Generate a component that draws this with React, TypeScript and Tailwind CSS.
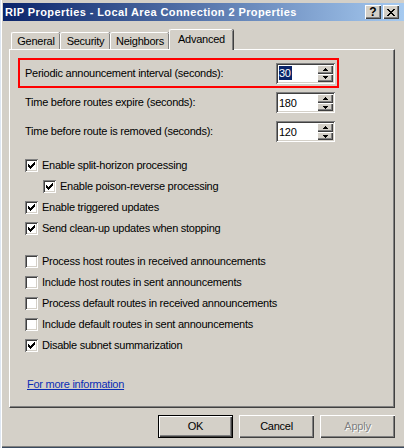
import React from "react";

const SUNKEN =
  "shadow-[inset_1px_1px_0_#808080,inset_-1px_-1px_0_#ffffff,inset_2px_2px_0_#404040,inset_-2px_-2px_0_#d4d0c8]";
const RAISED =
  "shadow-[inset_1px_1px_0_#ffffff,inset_-1px_-1px_0_#404040,inset_-2px_-2px_0_#808080]";

function Check({ checked }: { checked: boolean }) {
  return (
    <span className={`relative block w-[13px] h-[13px] shrink-0 bg-white ${SUNKEN}`}>
      {checked && (
        <svg
          className="absolute left-[3px] top-[3px]"
          width="7"
          height="7"
          viewBox="0 0 7 7"
          shapeRendering="crispEdges"
        >
          {[2, 3, 4, 3, 2, 1, 0].map((y, x) => (
            <rect key={x} x={x} y={y} width="1" height="3" fill="#000" />
          ))}
        </svg>
      )}
    </span>
  );
}

function Tri({ up }: { up?: boolean }) {
  return (
    <svg width="5" height="3" viewBox="0 0 5 3" shapeRendering="crispEdges">
      {up ? (
        <>
          <rect x="2" y="0" width="1" height="1" fill="#000" />
          <rect x="1" y="1" width="3" height="1" fill="#000" />
          <rect x="0" y="2" width="5" height="1" fill="#000" />
        </>
      ) : (
        <>
          <rect x="0" y="0" width="5" height="1" fill="#000" />
          <rect x="1" y="1" width="3" height="1" fill="#000" />
          <rect x="2" y="2" width="1" height="1" fill="#000" />
        </>
      )}
    </svg>
  );
}

function Spin({ value, selected }: { value: string; selected?: boolean }) {
  return (
    <div className={`flex w-[59px] h-[21px] bg-white p-[2px] ${SUNKEN}`}>
      <div className="flex-1 flex items-center pl-[1px]">
        <span
          className={
            selected
              ? "bg-[#0a246a] text-white leading-[14px] pr-[1px]"
              : "text-black leading-[14px]"
          }
        >
          {value}
        </span>
      </div>
      <div className="flex flex-col w-[16px]">
        <div className={`h-[9px] bg-[#d4d0c8] flex items-center justify-center ${RAISED}`}>
          <Tri up />
        </div>
        <div className={`h-[8px] bg-[#d4d0c8] flex items-center justify-center ${RAISED}`}>
          <Tri />
        </div>
      </div>
    </div>
  );
}

function FieldRow({
  label,
  value,
  boxed,
  selected,
  tall,
}: {
  label: string;
  value: string;
  boxed?: boolean;
  selected?: boolean;
  tall?: boolean;
}) {
  return (
    <div
      className={`ml-[8px] w-[321px] ${tall ? "h-[30px]" : "h-[29px]"} border-2 ${
        boxed ? "border-[#ff0000]" : "border-transparent"
      } flex items-center justify-between pl-[5px] pr-[2px]`}
    >
      <span>{label}</span>
      <Spin value={value} selected={selected} />
    </div>
  );
}

function CheckRow({
  label,
  checked,
  indent,
}: {
  label: string;
  checked: boolean;
  indent?: boolean;
}) {
  return (
    <div className={`h-[21px] flex items-center gap-[4px] ${indent ? "pl-[33px]" : "pl-[15px]"}`}>
      <Check checked={checked} />
      <span>{label}</span>
    </div>
  );
}

function Button({
  label,
  isDefault,
  disabled,
}: {
  label: string;
  isDefault?: boolean;
  disabled?: boolean;
}) {
  return (
    <div
      className={`w-[75px] h-[23px] flex items-center justify-center bg-[#d4d0c8] ${
        isDefault
          ? "shadow-[inset_0_0_0_1px_#000000,inset_2px_2px_0_#ffffff,inset_-2px_-2px_0_#404040,inset_-3px_-3px_0_#808080]"
          : RAISED
      }`}
    >
      <span
        className={
          disabled ? "text-[#808080] [text-shadow:1px_1px_0_#ffffff]" : "text-black"
        }
      >
        {label}
      </span>
    </div>
  );
}

function Tab({ label, w, selected }: { label: string; w: string; selected?: boolean }) {
  if (selected) {
    return (
      <div
        className={`${w} h-[21px] relative z-10 bg-[#d4d0c8] rounded-t-[2px] border-l border-t border-white shadow-[inset_-1px_0_0_#808080,1px_0_0_#404040] flex items-center justify-center pb-[2px]`}
      >
        {label}
      </div>
    );
  }
  return (
    <div
      className={`${w} h-[17px] mb-[1px] bg-[#d4d0c8] rounded-t-[2px] border-l border-t border-white shadow-[inset_-1px_0_0_#808080,1px_0_0_#404040] flex items-center justify-center`}
    >
      {label}
    </div>
  );
}

export default function App() {
  return (
    <div
      className="w-[404px] h-[448px] bg-[#d4d0c8] flex flex-col pt-[3px] pl-[3px] pb-[3px] text-[11px] leading-[13px] tracking-[-0.25px] text-black font-['Liberation_Sans',Arial,sans-serif] shadow-[inset_1px_0_0_#dde6f2,inset_2px_0_0_#ffffff,inset_0_-1px_0_#3a4a5e,inset_0_-2px_0_#808080] overflow-hidden"
    >
      {/* Title bar */}
      <div className="h-[18px] flex items-center pl-[2px] pr-[5px] bg-[linear-gradient(to_right,#0a246a,#a6caf0)]">
        <span className="flex-1 text-white font-bold tracking-[0.4px]">
          RIP Properties - Local Area Connection 2 Properties
        </span>
        <div className="flex gap-[2px]">
          <div className={`w-[16px] h-[14px] bg-[#d4d0c8] flex items-center justify-center ${RAISED}`}>
            <span className="font-bold text-[12px] leading-[12px] tracking-normal">?</span>
          </div>
          <div className={`w-[16px] h-[14px] bg-[#d4d0c8] flex items-center justify-center pr-[1px] ${RAISED}`}>
            <svg width="8" height="7" viewBox="0 0 8 7" shapeRendering="crispEdges">
              {[0, 1, 2, 3, 4, 5, 6].map((i) => (
                <React.Fragment key={i}>
                  <rect x={i} y={i} width="2" height="1" fill="#000" />
                  <rect x={6 - i} y={i} width="2" height="1" fill="#000" />
                </React.Fragment>
              ))}
            </svg>
          </div>
        </div>
      </div>

      {/* Body */}
      <div className="flex flex-col pl-[6px] pr-[9px]">
        {/* Tabs */}
        <div className="mt-[8px] h-[21px] flex items-end pl-[2px]">
          <Tab label="General" w="w-[49px]" />
          <Tab label="Security" w="w-[50px]" />
          <Tab label="Neighbors" w="w-[59px]" />
          <Tab label="Advanced" w="w-[64px]" selected />
        </div>

        {/* Panel */}
        <div className="-mt-px h-[359px] border-t border-l border-white border-r border-b border-r-[#404040] border-b-[#404040] shadow-[inset_-1px_-1px_0_#808080] flex flex-col">
          <div className="mt-[8px]">
            <FieldRow
              label="Periodic announcement interval (seconds):"
              value="30"
              boxed
              selected
              tall
            />
            <FieldRow label="Time before routes expire (seconds):" value="180" />
            <FieldRow label="Time before route is removed (seconds):" value="120" />
          </div>

          <div className="mt-[9px] flex flex-col">
            <CheckRow label="Enable split-horizon processing" checked />
            <CheckRow label="Enable poison-reverse processing" checked indent />
            <CheckRow label="Enable triggered updates" checked />
            <CheckRow label="Send clean-up updates when stopping" checked />
          </div>

          <div className="mt-[12px] flex flex-col">
            <CheckRow label="Process host routes in received announcements" checked={false} />
            <CheckRow label="Include host routes in sent announcements" checked={false} />
            <CheckRow label="Process default routes in received announcements" checked={false} />
            <CheckRow label="Include default routes in sent announcements" checked={false} />
            <CheckRow label="Disable subnet summarization" checked />
          </div>

          <div className="mt-[22px] pl-[17px]">
            <span className="text-[#0a2db5] underline underline-offset-[1px]">
              For more information
            </span>
          </div>
        </div>

        {/* Buttons */}
        <div className="mt-[7px] flex justify-end gap-[6px]">
          <Button label="OK" isDefault />
          <Button label="Cancel" />
          <Button label="Apply" disabled />
        </div>
      </div>
    </div>
  );
}
